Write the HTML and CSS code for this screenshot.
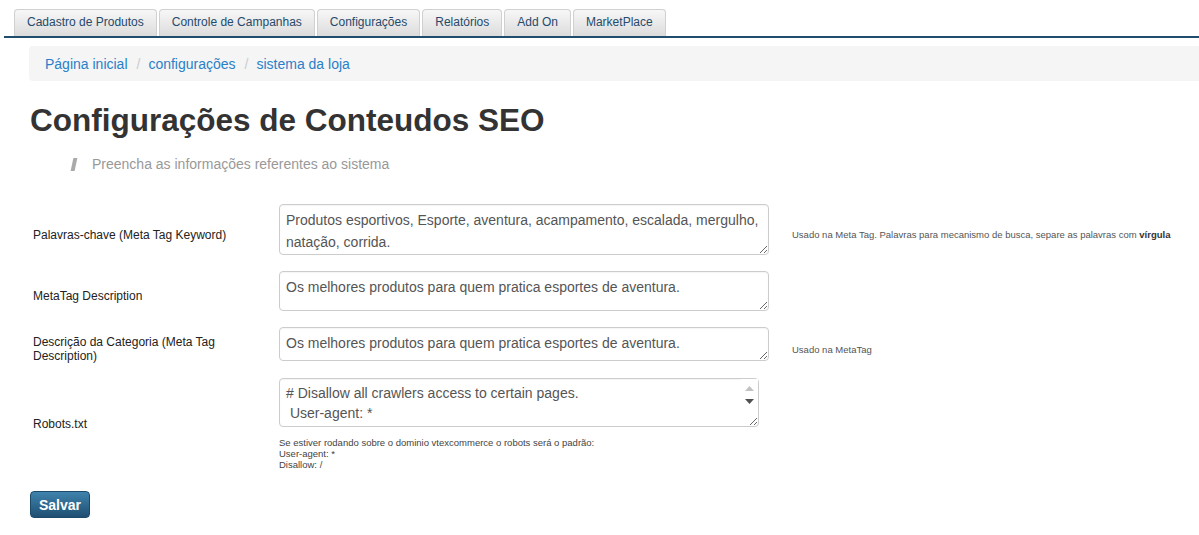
FILE: index.html
```html
<!DOCTYPE html>
<html lang="pt-BR">
<head>
<meta charset="utf-8">
<title>Configurações de Conteudos SEO</title>
<link rel="stylesheet" href="styles.css">
</head>
<body>
<nav class="tabs">
  <a class="tab" href="#">Cadastro de Produtos</a>
  <a class="tab" href="#">Controle de Campanhas</a>
  <a class="tab" href="#">Configurações</a>
  <a class="tab" href="#">Relatórios</a>
  <a class="tab" href="#">Add On</a>
  <a class="tab" href="#">MarketPlace</a>
</nav>
<div class="page">
  <ol class="breadcrumb">
    <li><a href="#">Página inicial</a></li>
    <li><a href="#">configurações</a></li>
    <li><a href="#">sistema da loja</a></li>
  </ol>
  <h1 class="title">Configurações de Conteudos SEO</h1>
  <p class="subtitle"><span class="bar"></span>Preencha as informações referentes ao sistema</p>
  <form class="form">
    <div class="row">
      <label class="label">Palavras-chave (Meta Tag Keyword)</label>
      <div class="field"><textarea class="input h1x">Produtos esportivos, Esporte, aventura, acampamento, escalada, mergulho, natação, corrida.</textarea></div>
      <div class="help">Usado na Meta Tag. Palavras para mecanismo de busca, separe as palavras com <b>vírgula</b></div>
    </div>
    <div class="row">
      <label class="label">MetaTag Description</label>
      <div class="field"><textarea class="input h2x">Os melhores produtos para quem pratica esportes de aventura.</textarea></div>
      <div class="help"></div>
    </div>
    <div class="row">
      <label class="label">Descrição da Categoria (Meta Tag Description)</label>
      <div class="field"><textarea class="input h3x">Os melhores produtos para quem pratica esportes de aventura.</textarea></div>
      <div class="help">Usado na MetaTag</div>
    </div>
    <div class="row">
      <label class="label">Robots.txt</label>
      <div class="field">
        <div class="robots-wrap">
          <textarea class="input robots"># Disallow all crawlers access to certain pages.
 User-agent: *
 Disallow: /checkout/
 Disallow: /account/</textarea>
          <div class="scrollbar">
            <svg class="arrow" width="9" height="5" viewBox="0 0 9 5"><path d="M0 5 L4.5 0 L9 5 Z" fill="#c2c2c2"/></svg>
            <svg class="arrow" width="9" height="5" viewBox="0 0 9 5"><path d="M0 0 L4.5 5 L9 0 Z" fill="#505050"/></svg>
          </div>
        </div>
        <div class="note">Se estiver rodando sobre o dominio vtexcommerce o robots será o padrão:<br>User-agent: *<br>Disallow: /</div>
      </div>
      <div class="help"></div>
    </div>
    <button type="button" class="btn">Salvar</button>
  </form>
</div>
</body>
</html>
```

FILE: styles.css
```css
* { box-sizing: border-box; }
html, body { margin: 0; padding: 0; background: #fff; }
body {
  font-family: "Liberation Sans", Arial, sans-serif;
  color: #333;
  font-size: 14px;
}
.tabs {
  display: flex;
  gap: 2px;
  margin: 9px 0 0 4px;
  padding-left: 10px;
  border-bottom: 2px solid #1f4d6b;
}
.tab {
  display: block;
  height: 27px;
  line-height: 25px;
  padding: 0 12px;
  font-size: 12px;
  color: #264a6c;
  text-decoration: none;
  border: 1px solid #d0d0d0;
  border-bottom: none;
  border-radius: 4px 4px 0 0;
  background: linear-gradient(#f7f7f7, #dcdcdc);
}
.page { padding-left: 29px; }
.breadcrumb {
  list-style: none;
  margin: 8px 0 0 0;
  padding: 0 16px;
  height: 35px;
  display: flex;
  align-items: center;
  background: #f5f5f5;
  border-radius: 4px 0 0 4px;
  font-size: 14px;
}
.breadcrumb li + li::before {
  content: "/";
  color: #ccc;
  padding: 0 8px 0 9px;
}
.breadcrumb a { color: #2a7fc8; text-decoration: none; }
.title {
  margin: 19px 0 0 1px;
  font-size: 31.5px;
  line-height: 40px;
  font-weight: bold;
  color: #333;
}
.subtitle {
  margin: 14px 0 0 43px;
  line-height: 20px;
  color: #999;
  font-size: 14px;
  display: flex;
  align-items: center;
}
.bar {
  display: inline-block;
  width: 4px;
  height: 13px;
  background: #aaa;
  transform: skewX(-12deg);
  margin-right: 16px;
}
.form { margin-top: 30px; display: flex; flex-direction: column; gap: 7px; }
.row {
  display: grid;
  grid-template-columns: 246px 490px 1fr;
  align-items: center;
  padding-left: 4px;
}
.row:nth-child(2), .row:nth-child(3) { margin-top: -1px; }
.label { font-size: 12px; line-height: 14px; color: #222; padding-right: 40px; }
.field { display: flex; flex-direction: column; }
.input {
  display: block;
  width: 490px;
  margin: 0 0 10px 0;
  padding: 4px 6px;
  font-family: "Liberation Sans", Arial, sans-serif;
  font-size: 14px;
  line-height: 22px;
  color: #555;
  border: 1px solid #ccc;
  border-radius: 4px;
  background: #fff;
  resize: vertical;
  box-shadow: inset 0 1px 1px rgba(0,0,0,.04);
}
.h1x { height: 51px; }
.h2x { height: 40px; }
.h3x { height: 34px; }
.robots-wrap { position: relative; width: 480px; margin-bottom: 10px; }
.robots {
  width: 480px;
  height: 49px;
  margin: 0;
  font-size: 14px;
  line-height: 20px;
  padding: 4px 22px 4px 6px;
  overflow: hidden;
}
.scrollbar {
  position: absolute;
  top: 1px;
  right: 1px;
  width: 17px;
  height: 32px;
  background: #fff;
  display: flex;
  flex-direction: column;
  align-items: center;
  justify-content: space-around;
  padding: 3px 0;
}
.arrow { display: block; }
.note { font-size: 9.5px; line-height: 11px; color: #444; }
.help { font-size: 9.5px; color: #555; padding-left: 23px; white-space: nowrap; }
.help b { color: #333; }
.btn {
  margin-top: 14px;
  width: 60px;
  height: 27px;
  padding: 0;
  font-family: "Liberation Sans", Arial, sans-serif;
  font-size: 14px;
  font-weight: bold;
  color: #fff;
  border: 1px solid #1c4a6a;
  border-radius: 4px;
  background: linear-gradient(#3f83ad, #1f4f72);
  align-self: flex-start;
  margin-left: 1px;
}
```
